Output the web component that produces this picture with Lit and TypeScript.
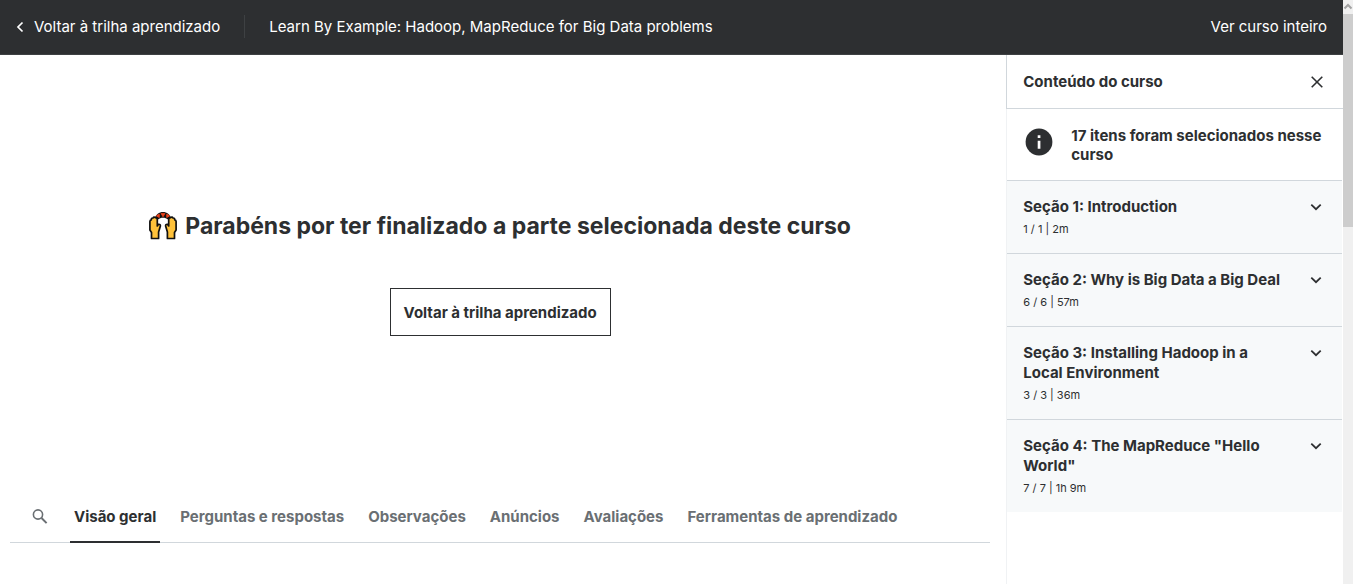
import { LitElement, html, css, svg } from "lit";
import { customElement, property } from "lit/decorators.js";
import { classMap } from "lit/directives/class-map.js";

const chevronDown = svg`<path d="M1.300 1.700 L6 6.200 L10.700 1.700" fill="none" stroke="#2d2f31" stroke-width="1.8"/>`;

@customElement("course-section")
class CourseSection extends LitElement {
  @property() heading = "";
  @property() progress = "";

  static styles = css`
    :host {
      display: block;
      background: #f7f9fa;
    }
    .section {
      display: flex;
      width: 100%;
      align-items: flex-start;
      gap: 24px;
      border: 0;
      padding: 16px 20px 16px 16px;
      background: none;
      color: #2d2f31;
      font: inherit;
      text-align: left;
      cursor: pointer;
    }
    .text {
      flex: 1;
    }
    .title {
      display: block;
      font-size: 15px;
      line-height: 20px;
      font-weight: 700;
    }
    .progress {
      display: block;
      padding: 4px 0 0;
      font-size: 11px;
      line-height: 16px;
    }
    .chevron {
      flex: none;
      width: 12px;
      height: 8px;
      margin-top: 6px;
    }
  `;

  render() {
    return html`<button class="section" type="button" aria-expanded="false">
      <span class="text">
        <span class="title">${this.heading}</span>
        <span class="progress">${this.progress}</span>
      </span>
      <svg class="chevron" viewBox="0 0 12 8" aria-hidden="true">${chevronDown}</svg>
    </button>`;
  }
}

@customElement("app-root")
class AppRoot extends LitElement {
  private tabs = [
    "Visão geral",
    "Perguntas e respostas",
    "Observações",
    "Anúncios",
    "Avaliações",
    "Ferramentas de aprendizado",
  ];

  private sections = [
    { heading: "Seção 1: Introduction", progress: "1 / 1 | 2m" },
    { heading: "Seção 2: Why is Big Data a Big Deal", progress: "6 / 6 | 57m" },
    { heading: "Seção 3: Installing Hadoop in a Local Environment", progress: "3 / 3 | 36m" },
    { heading: 'Seção 4: The MapReduce "Hello World"', progress: "7 / 7 | 1h 9m" },
  ];

  static styles = css`
    * {
      box-sizing: border-box;
    }
    :host {
      display: flex;
      min-height: 100vh;
      background: #fff;
      color: #2d2f31;
      font-family: Inter, "Liberation Sans", sans-serif;
    }
    .page {
      flex: 1;
      min-width: 0;
      display: flex;
      flex-direction: column;
    }
    .bar {
      display: flex;
      align-items: center;
      padding: 15px 16px 16px;
      border-bottom: 1px solid #3e4143;
      background: #2d2f31;
      font-size: 15px;
      line-height: 23px;
    }
    .bar a {
      color: #fff;
      text-decoration: none;
    }
    .bar .back {
      display: flex;
      align-items: center;
      gap: 10px;
      padding-right: 24px;
      border-right: 1px solid #3e4143;
    }
    .course {
      flex: 1;
      padding-left: 24px;
    }
    .columns {
      flex: 1;
      display: flex;
    }
    .main {
      flex: 1;
      min-width: 0;
      display: flex;
      flex-direction: column;
      padding: 0 16px 0 10px;
    }
    .done {
      height: 436px;
      display: flex;
      flex-direction: column;
      align-items: center;
      justify-content: center;
      gap: 46px;
    }
    .congrats {
      display: flex;
      align-items: center;
      gap: 8px;
      margin: 0;
      font-size: 23px;
      line-height: 32px;
      font-weight: 700;
    }
    .return {
      height: 48px;
      padding: 0 13px;
      border: 1px solid #2d2f31;
      background: #fff;
      color: #2d2f31;
      font: inherit;
      font-size: 15px;
      font-weight: 700;
    }
    .tabs {
      display: flex;
      align-items: stretch;
      height: 52px;
      border-bottom: 1px solid #d1d7dc;
    }
    .search {
      display: flex;
      align-items: center;
      padding: 0 21px 0 22px;
      border: 0;
      background: none;
    }
    .tab {
      margin: 0 16px -1px 0;
      padding: 0 4px;
      border: 0;
      border-bottom: 2px solid transparent;
      background: none;
      color: #6a6f73;
      font: inherit;
      font-size: 15px;
      font-weight: 700;
      white-space: nowrap;
    }
    .tab.active {
      color: #2d2f31;
      border-bottom-color: #2d2f31;
    }
    .side {
      flex: none;
      width: calc(25% + 1px);
      border-left: 1px solid #f0f2f4;
    }
    .side-head {
      display: flex;
      align-items: center;
      justify-content: space-between;
      height: 54px;
      margin-left: -1px;
      padding: 0 20px 0 16px;
      border-left: 1px solid #d1d7dc;
      border-bottom: 1px solid #d1d7dc;
    }
    .side-title {
      margin: 0;
      font-size: 15px;
      line-height: 20px;
      font-weight: 700;
    }
    .close {
      display: flex;
      padding: 0;
      border: 0;
      background: none;
    }
    .notice {
      display: flex;
      align-items: flex-start;
      gap: 16px;
      padding: 17px 16px 16px;
      border-bottom: 1px solid #d1d7dc;
      font-size: 15px;
      line-height: 19px;
      font-weight: 700;
    }
    .notice svg {
      flex: none;
    }
    .notice p {
      margin: 0;
    }
    course-section + course-section {
      border-top: 1px solid #d1d7dc;
    }
    .list {
      padding-right: 1px;
    }
    .scroll {
      flex: none;
      width: 10px;
      background: #f0f0f0;
    }
    .scroll svg {
      display: block;
    }
    .thumb {
      height: 213px;
      background: #cdcdcd;
    }
  `;

  render() {
    return html`
      <div class="page">
        <header class="bar">
          <a class="back" href="#">
            <svg width="8" height="12" viewBox="0 0 8 12" aria-hidden="true">
              <path d="M6.5 1.5 L2 6 L6.5 10.5" fill="none" stroke="#fff" stroke-width="1.7" />
            </svg>
            Voltar à trilha aprendizado
          </a>
          <a class="course" href="#">Learn By Example: Hadoop, MapReduce for Big Data problems</a>
          <a href="#">Ver curso inteiro</a>
        </header>
        <div class="columns">
          <main class="main">
            <div class="done">
              <h1 class="congrats">
                <svg width="28" height="28" viewBox="0 0 28 28" aria-hidden="true">
                  <path d="M5.500 6.500 C7 2.500 10 0 14 0 C18 0 21 2.500 22.500 6.500 L19 7.500 C17.500 6.300 16 5.800 14 5.800 C12 5.800 10.500 6.300 9 7.500 Z" fill="#111" />
                  <path d="M7.300 3.800 L10.300 2.200 L10.300 5.600 Z M12 1.400 L16 1.400 L14 4.800 Z M17.700 2.200 L20.700 3.800 L17.700 5.600 Z" fill="#f0431a" stroke="#f0431a" stroke-width="0.800" />
                  <g fill="#ffc23a" stroke="#111" stroke-width="1.700" stroke-linejoin="round">
                    <path d="M2.500 26.500 V20.500 L0.900 18 V9.500 Q0.900 7.800 2.300 7.800 Q2.300 5.800 4 6 Q5 4.600 6.300 5.600 Q8.300 5.600 8.300 7.600 V14 L9.500 12.300 Q11.600 12 11.400 14 L9.600 20 V26.500 Z" />
                    <path d="M25.500 26.500 V20.500 L27.100 18 V9.500 Q27.100 7.800 25.700 7.800 Q25.700 5.800 24 6 Q23 4.600 21.700 5.600 Q19.700 5.600 19.700 7.600 V14 L18.500 12.300 Q16.400 12 16.600 14 L18.400 20 V26.500 Z" />
                  </g>
                </svg>
                Parabéns por ter finalizado a parte selecionada deste curso
              </h1>
              <button class="return" type="button">Voltar à trilha aprendizado</button>
            </div>
            <nav class="tabs">
              <button class="search" type="button" aria-label="Pesquisar">
                <svg width="17" height="17" viewBox="0 0 17 17" aria-hidden="true">
                  <circle cx="6" cy="6.500" r="4.600" fill="none" stroke="#6a6f73" stroke-width="1.600" />
                  <path d="M9.500 10 L14.600 15.100" stroke="#6a6f73" stroke-width="2" />
                </svg>
              </button>
              ${this.tabs.map(
                (label, i) => html`<button type="button" class=${classMap({ tab: true, active: i === 0 })}>${label}</button>`
              )}
            </nav>
          </main>
          <aside class="side">
            <div class="side-head">
              <h2 class="side-title">Conteúdo do curso</h2>
              <button class="close" type="button" aria-label="Fechar">
                <svg width="12" height="12" viewBox="0 0 12 12" aria-hidden="true">
                  <path d="M0.700 0.700 L11.300 11.300 M11.300 0.700 L0.700 11.300" stroke="#2d2f31" stroke-width="1.600" />
                </svg>
              </button>
            </div>
            <div class="list">
              <div class="notice">
                <svg width="32" height="32" viewBox="0 0 32 32" aria-hidden="true">
                  <circle cx="16" cy="16" r="13.400" fill="#2d2f31" />
                  <path d="M14.700 9.300 h2.700 v2.700 h-2.700 z M14.700 14.700 h2.700 v8 h-2.700 z" fill="#fff" />
                </svg>
                <p>17 itens foram selecionados nesse curso</p>
              </div>
              ${this.sections.map(
                (s) => html`<course-section .heading=${s.heading} .progress=${s.progress}></course-section>`
              )}
            </div>
          </aside>
        </div>
      </div>
      <div class="scroll" aria-hidden="true">
        <svg width="10" height="14" viewBox="0 0 10 14">
          <path d="M1.500 8.500 L5 5 L8.500 8.500" fill="none" stroke="#a3a3a3" stroke-width="2" />
        </svg>
        <div class="thumb"></div>
      </div>
    `;
  }
}
